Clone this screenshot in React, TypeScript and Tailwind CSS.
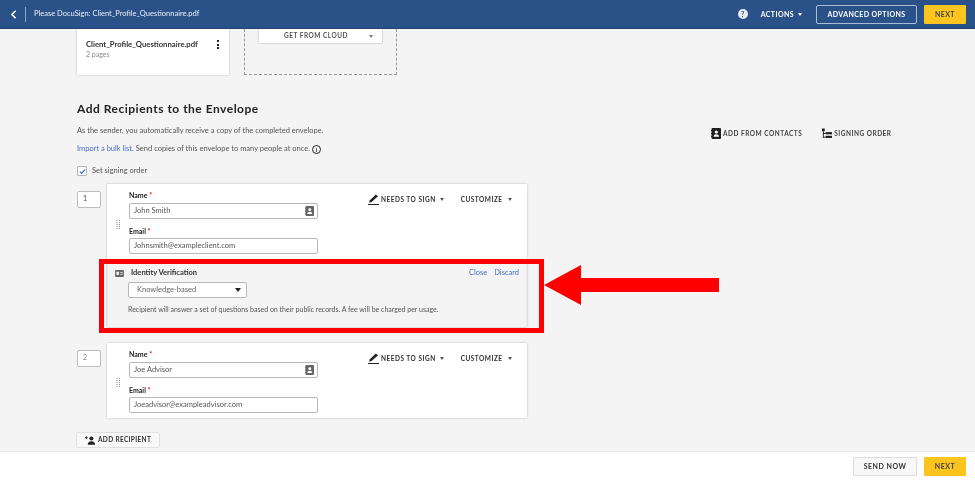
import { ChevronLeft } from 'lucide-react';

const Caret = ({ className = 'border-t-[#555]' }: { className?: string }) => (
  <span className={`inline-block w-0 h-0 border-x-[2.5px] border-x-transparent border-t-[3px] ${className}`}></span>
);

const ContactsIcon = ({ className = 'w-[10px] h-[11px]' }: { className?: string }) => (
  <svg viewBox="0 0 10 11" className={className} fill="currentColor">
    <path d="M1.5 0H9a1 1 0 0 1 1 1v9a1 1 0 0 1-1 1H1.5a1 1 0 0 1-1-1V9H0V8h.5V6H0V5h.5V3H0V2h.5V1a1 1 0 0 1 1-1Z" />
    <circle cx="5.3" cy="4" r="1.6" fill="#fff" />
    <path d="M2.6 8.8c0-1.7 1.2-2.5 2.7-2.5s2.7.8 2.7 2.5Z" fill="#fff" />
  </svg>
);

const OrderIcon = () => (
  <svg viewBox="0 0 11 11" className="w-[10px] h-[11px] text-[#1f1f1f]" fill="currentColor">
    <rect x="0" y="0" width="3" height="3" />
    <rect x="1" y="3" width="1" height="7" />
    <rect x="1" y="5" width="3" height="1" />
    <rect x="1" y="9" width="3" height="1" />
    <rect x="4" y="4" width="7" height="2.4" />
    <rect x="4" y="8" width="7" height="2.4" />
  </svg>
);

const PenIcon = () => (
  <svg viewBox="0 0 11 11" className="w-[11px] h-[11px] text-[#222]" fill="currentColor">
    <path d="M7.8.4 10 2.2 3.6 8 1 8.8 1.9 6.2Z" />
    <rect x="0" y="10" width="11" height="1" />
  </svg>
);

const DragHandle = () => (
  <svg viewBox="0 0 5 9" className="w-[5px] h-[9px]" fill="#8a8a8a">
    {[0, 2, 4, 6, 8].map(y => (
      <g key={y}>
        <rect x="0.5" y={y} width="1" height="1" />
        <rect x="3" y={y} width="1" height="1" />
      </g>
    ))}
  </svg>
);

const Fields = ({ name, email }: { name: string; email: string }) => (
  <div className="w-[189px] pt-[7px]">
    <div className="text-[7px] leading-[9px] font-bold text-[#222]">Name <span className="text-[#d00]">*</span></div>
    <div className="mt-[3px] h-[16px] border-[1.5px] border-[#b8b8b8] rounded-[2px] bg-white flex items-center justify-between pl-[4px] pr-[3px] text-[7.5px] text-[#555]">
      {name}
      <ContactsIcon className="w-[9px] h-[10px] text-[#666]" />
    </div>
    <div className="mt-[8px] text-[7px] leading-[9px] font-bold text-[#222]">Email <span className="text-[#d00]">*</span></div>
    <div className="mt-[2px] h-[16px] border-[1.5px] border-[#b8b8b8] rounded-[2px] bg-white flex items-center pl-[4px] text-[7.5px] text-[#555]">{email}</div>
  </div>
);

const RoleActions = () => (
  <div className="ml-[50px] pt-[10px] flex items-center self-start text-[6.5px] leading-[10px] font-bold tracking-[0.5px] text-[#333]">
    <PenIcon />
    <span className="ml-[2px]">NEEDS TO SIGN</span>
    <span className="ml-[4px] flex"><Caret /></span>
    <span className="ml-[17px]">CUSTOMIZE</span>
    <span className="ml-[5px] flex"><Caret /></span>
  </div>
);

const OrderBox = ({ value, color }: { value: string; color: string }) => (
  <div className={`w-[24px] h-[17px] mt-[7px] bg-white border-[1.5px] border-[#bdbdbd] rounded-[2px] pl-[5px] text-[7px] leading-[13px] ${color}`}>{value}</div>
);

export default function App() {
  return (
    <div className="relative w-[975px] h-[480px] overflow-hidden flex flex-col bg-[#f4f4f4] font-['Lato',sans-serif] blur-[0.4px]">
      {/* Header */}
      <header className="h-[29px] shrink-0 bg-[#2a5288] border-b border-[#1f4272] flex items-center text-white">
        <ChevronLeft size={13} strokeWidth={3} className="ml-[7px]" />
        <div className="ml-[5px] w-px h-[15px] bg-[#8ea6c6]"></div>
        <span className="ml-[8px] text-[7.5px] text-[#e8eef6]">Please DocuSign: Client_Profile_Questionnaire.pdf</span>
        <div className="ml-auto flex items-center">
          <div className="w-[10px] h-[10px] rounded-full bg-[#e6ebf2] text-[#2a5288] text-[7px] leading-[10px] font-bold text-center">?</div>
          <span className="ml-[13px] text-[7px] font-bold tracking-[0.4px]">ACTIONS</span>
          <span className="ml-[4px] flex"><Caret className="border-t-white" /></span>
          <div className="ml-[14px] w-[101px] h-[19px] border border-[#a9bdd6] rounded-[2px] text-[7px] leading-[17px] font-bold tracking-[0.4px] text-center">ADVANCED OPTIONS</div>
          <div className="ml-[7px] mr-[9px] w-[42px] h-[19px] bg-[#fcc41e] rounded-[1px] text-[#444] text-[7px] leading-[19px] font-bold tracking-[0.4px] text-center">NEXT</div>
        </div>
      </header>

      {/* Scrolled content, top of the document row is cut by the header */}
      <main className="flex-1 pl-[77px] overflow-hidden">
        <div className="flex h-[46px]">
          <div className="w-[152px] bg-white shadow-[0_0_2px_rgba(0,0,0,0.25)] pl-[9px] pr-[7px] pt-[10px] flex justify-between">
            <div>
              <div className="text-[7.7px] leading-[10px] font-bold text-[#333]">Client_Profile_Questionnaire.pdf</div>
              <div className="text-[7px] leading-[10px] text-[#8a8a8a]">2 pages</div>
            </div>
            <div className="flex flex-col gap-[1.5px] pt-[1px] pr-[3px]">
              <span className="w-[2px] h-[2px] bg-[#222]"></span>
              <span className="w-[2px] h-[2px] bg-[#222]"></span>
              <span className="w-[2px] h-[2px] bg-[#222]"></span>
            </div>
          </div>
          <div className="ml-[15px] w-[153px] border-x border-b border-dashed border-[#9a9a9a] px-[14px]">
            <div className="h-[14px] bg-white shadow-[0_0_2px_rgba(0,0,0,0.3)] flex items-center text-[6.5px] font-bold tracking-[0.5px] text-[#555]">
              <span className="ml-[25px]">GET FROM CLOUD</span>
              <span className="ml-auto mr-[9px] flex"><Caret className="border-t-[#777]" /></span>
            </div>
          </div>
        </div>

        <h1 className="mt-[26px] text-[12px] leading-[16px] font-bold tracking-[0.5px] text-[#222]">Add Recipients to the Envelope</h1>

        <div className="mt-[9px] flex items-start">
          <div className="w-[634px]">
            <p className="text-[7.5px] leading-[10px] text-[#555]">As the sender, you automatically receive a copy of the completed envelope.</p>
            <p className="mt-[8px] flex items-center text-[7.5px] leading-[10px] text-[#555]">
              <span className="text-[#4a6fc4]">Import a bulk list.</span>
              <span className="ml-[2px]">Send copies of this envelope to many people at once.</span>
              <span className="ml-[2px] w-[9px] h-[9px] rounded-full border border-[#222] text-[6px] leading-[7px] font-bold text-center text-[#222]">i</span>
            </p>
          </div>
          <div className="mt-[2px] flex items-center text-[6.5px] leading-[11px] font-bold tracking-[0.5px] text-[#444]">
            <ContactsIcon className="w-[10px] h-[11px] text-[#1f1f1f]" />
            <span className="ml-[2px]">ADD FROM CONTACTS</span>
            <span className="ml-[20px]"><OrderIcon /></span>
            <span className="ml-[2px]">SIGNING ORDER</span>
          </div>
        </div>

        <label className="mt-[12px] flex items-center text-[7.5px] leading-[10px] text-[#555]">
          <span className="w-[10px] h-[10px] bg-white border border-[#b5b5b5] rounded-[1px] flex items-center justify-center">
            <svg viewBox="0 0 8 8" className="w-[7px] h-[7px]" fill="none" stroke="#3b6fd0" strokeWidth="1.4"><path d="M1 4.2 3 6.2 7 1.6" /></svg>
          </span>
          <span className="ml-[5px]">Set signing order</span>
        </label>

        {/* Recipient 1 */}
        <div className="mt-[8px] flex items-start">
          <OrderBox value="1" color="text-[#444]" />
          <div className="ml-[6px] w-[420px] h-[143px] bg-white shadow-[0_0_2px_rgba(0,0,0,0.25)] flex flex-col">
            <div className="flex h-[76px]">
              <div className="w-[22px] flex justify-center pt-[36px]"><DragHandle /></div>
              <Fields name="John Smith" email="Johnsmith@exampleclient.com" />
              <RoleActions />
            </div>
            <div className="flex-1 bg-[#f4f4f4] border-x border-[#ebebeb] px-[7px] pt-[8px]">
              <div className="flex items-center text-[7.5px] leading-[10px]">
                <svg viewBox="0 0 10 8" className="w-[9px] h-[7px]" fill="#666">
                  <rect width="10" height="8" rx="1" />
                  <rect x="1.4" y="2" width="3" height="3.6" fill="#f4f4f4" />
                  <rect x="6" y="2.2" width="2.6" height="1" fill="#f4f4f4" />
                  <rect x="6" y="4.4" width="2.6" height="1" fill="#f4f4f4" />
                </svg>
                <span className="ml-[7px] font-bold text-[#333]">Identity Verification</span>
                <span className="ml-auto text-[#4a6fc4]">Close</span>
                <span className="ml-[7px] text-[#4a6fc4]">Discard</span>
              </div>
              <div className="mt-[4px] ml-[13px] w-[119px] h-[16px] bg-white border-[1.5px] border-[#b8b8b8] rounded-[2px] flex items-center justify-between pl-[8px] pr-[5px] text-[7.5px] text-[#666]">
                Knowledge-based
                <span className="inline-block w-0 h-0 border-x-[3px] border-x-transparent border-t-[4px] border-t-[#222]"></span>
              </div>
              <p className="mt-[7px] ml-[13px] text-[7px] leading-[9px] text-[#555]">Recipient will answer a set of questions based on their public records. A fee will be charged per usage.</p>
            </div>
          </div>
        </div>

        {/* Recipient 2 */}
        <div className="mt-[16px] flex items-start">
          <OrderBox value="2" color="text-[#888]" />
          <div className="ml-[6px] w-[420px] h-[75px] bg-white shadow-[0_0_2px_rgba(0,0,0,0.25)] flex">
            <div className="w-[22px] flex justify-center pt-[35px]"><DragHandle /></div>
            <Fields name="Joe Advisor" email="Joeadvisor@exampleadvisor.com" />
            <RoleActions />
          </div>
        </div>

        <button className="mt-[14px] -ml-px w-[84px] h-[16px] bg-[#f8f8f8] border border-[#e0e0e0] rounded-[2px] flex items-center pl-[8px] text-[6.5px] font-bold tracking-[0.35px] text-[#333]">
          <svg viewBox="0 0 12 9" className="w-[11px] h-[9px]" fill="#222">
            <rect x="0" y="1" width="3" height="1" />
            <rect x="1" y="0" width="1" height="3" />
            <circle cx="7" cy="2.2" r="2.2" />
            <path d="M3 9c0-2.6 1.800-3.800 4-3.800S11 6.400 11 9Z" />
          </svg>
          <span className="ml-[2px]">ADD RECIPIENT</span>
        </button>
      </main>

      {/* Footer */}
      <footer className="h-[29px] shrink-0 bg-white border-t border-[#e6e6e6] flex items-center justify-end pr-[9px] text-[7px] font-bold tracking-[0.5px]">
        <div className="w-[64px] h-[19px] bg-[#f8f8f8] border border-[#dcdcdc] rounded-[1px] leading-[17px] text-center text-[#333]">SEND NOW</div>
        <div className="ml-[7px] w-[42px] h-[19px] bg-[#fcc41e] rounded-[1px] leading-[19px] text-center text-[#444]">NEXT</div>
      </footer>

      {/* Annotation drawn over the screenshot */}
      <div className="absolute left-[99px] top-[259px] w-[445px] h-[74px] border-[5px] border-[#f00]"></div>
      <svg className="absolute left-[544px] top-[264px] w-[176px] h-[42px]" viewBox="0 0 176 42" fill="#f00">
        <path d="M0 21 37 1V14H175V28H37V41Z" />
      </svg>
    </div>
  );
}
